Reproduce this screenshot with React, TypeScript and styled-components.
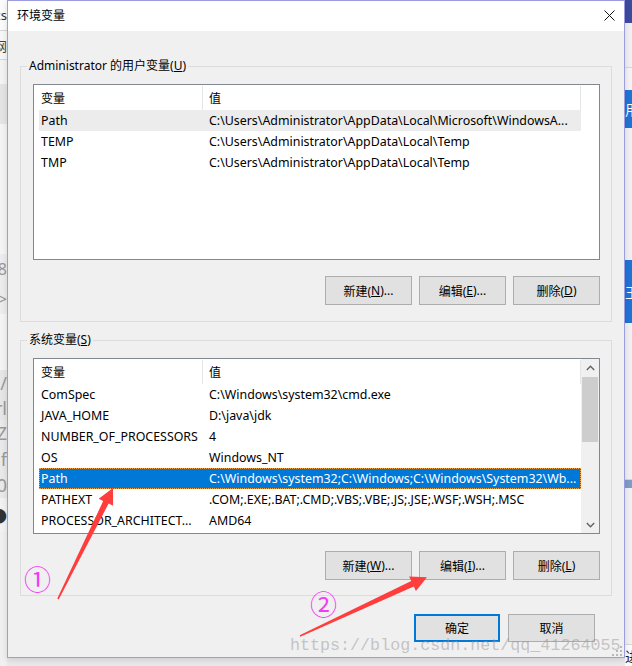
import React from "react";
import styled, { createGlobalStyle, css } from "styled-components";

const UI_FONT = `"Segoe UI", "Noto Sans", "Noto Sans CJK SC", sans-serif`;

const Global = createGlobalStyle`
  html, body { margin: 0; padding: 0; background: #e9e9eb; }
  body { font-family: ${UI_FONT}; font-size: 12px; color: #000; }
  * { box-sizing: border-box; }
`;

const Desktop = styled.div`
  position: relative;
  width: 632px;
  height: 666px;
  overflow: hidden;
  display: flex;
  align-items: flex-start;
  background: #e9e9eb;
`;

/* ---------- background windows peeking out ---------- */
const Peek = styled.div`
  width: 7px;
  height: 666px;
  flex: none;
  overflow: hidden;
  display: flex;
  flex-direction: column;
  background: #f0f0f0;
`;

const PeekBand = styled.div<{ $h: number; $bg?: string; $color?: string; $line?: boolean; $align?: "start" | "end"; $size?: number }>`
  height: ${(p) => p.$h}px;
  flex: none;
  background: ${(p) => p.$bg || "transparent"};
  color: ${(p) => p.$color || "#999"};
  display: flex;
  align-items: center;
  justify-content: ${(p) => (p.$align === "start" ? "flex-start" : "flex-end")};
  white-space: nowrap;
  font-size: ${(p) => p.$size || 13}px;
  ${(p) => p.$line && css`border-bottom: 1px solid #d6d6d6;`}
`;

/* ---------- dialog ---------- */
const Dialog = styled.div`
  position: relative;
  z-index: 1;
  width: 618px;
  height: 658px;
  flex: none;
  border: 1px solid #9c9cdf;
  background: #f0f0f0;
  display: flex;
  flex-direction: column;
  box-shadow: 0 2px 6px rgba(0, 0, 0, 0.12);
`;

const TitleBar = styled.div`
  height: 30px;
  flex: none;
  background: #fff;
  display: flex;
  align-items: center;
  justify-content: space-between;
  padding: 0 9px 0 9px;
`;

const Title = styled.span`
  font-size: 12px;
  line-height: 16px;
`;

const Close = styled.span`
  width: 11px;
  height: 11px;
  display: flex;
  margin-top: -1px;
`;

const Body = styled.div`
  flex: 1;
  display: flex;
  flex-direction: column;
  padding: 0 12px;
`;

const Group = styled.fieldset<{ $top: number; $bottom: number; $gap: number }>`
  margin: ${(p) => p.$top}px 0 0 0;
  padding: 10px 11px ${(p) => p.$bottom}px 12px;
  border: 1px solid #dcdcdc;
  min-width: 0;
  display: flex;
  flex-direction: column;
  gap: ${(p) => p.$gap}px;
`;

const Legend = styled.legend`
  padding: 0 2px;
  margin-left: -6px;
  font-size: 12px;
  line-height: 16px;
`;

const List = styled.div`
  height: 176px;
  border: 1px solid #828790;
  background: #fff;
  display: grid;
  grid-template-columns: 547px 1fr;
  overflow: hidden;
`;

const ListMain = styled.div`
  display: flex;
  flex-direction: column;
`;

const Header = styled.div`
  height: 25px;
  display: flex;
  flex: none;
`;

const HeadCell = styled.div<{ $w: number; $pad: number }>`
  width: ${(p) => p.$w}px;
  padding-left: ${(p) => p.$pad}px;
  border-right: 1px solid #e5e5e5;
  display: flex;
  align-items: center;
  margin-top: 1px;
`;

const Row = styled.div<{ $state?: "selected" | "inactive" }>`
  margin-left: 5px;
  width: 542px;
  height: 21px;
  flex: none;
  display: flex;
  align-items: center;
  font-size: 12.4px;
  ${(p) =>
    p.$state === "inactive" &&
    css`
      background: #ececec;
    `}
  ${(p) =>
    p.$state === "selected" &&
    css`
      background: #0078d7;
      color: #fff;
      outline: 1px dotted #f0a040;
      outline-offset: -1px;
    `}
`;

const Cell = styled.div<{ $w?: number; $pl: number }>`
  ${(p) => (p.$w ? css`width: ${p.$w}px; flex: none;` : css`flex: 1;`)}
  padding-left: ${(p) => p.$pl}px;
  padding-right: 4px;
  white-space: nowrap;
  overflow: hidden;
`;

const Scrollbar = styled.div`
  background: #f0f0f0;
  display: flex;
  flex-direction: column;
`;

const ArrowBox = styled.div`
  height: 17px;
  flex: none;
  display: flex;
  align-items: center;
  justify-content: center;
`;

const Thumb = styled.div`
  height: 65px;
  margin: 1px 1px 0 1px;
  background: #cdcdcd;
`;

const Spacer = styled.div`
  flex: 1;
`;

const ButtonRow = styled.div<{ $gap: number; $right?: number; $top?: number }>`
  display: flex;
  justify-content: flex-end;
  gap: ${(p) => p.$gap}px;
  padding-right: ${(p) => p.$right || 0}px;
  margin-top: ${(p) => p.$top || 0}px;
`;

const Button = styled.button<{ $w: number; $h: number; $default?: boolean }>`
  width: ${(p) => p.$w}px;
  height: ${(p) => p.$h}px;
  padding: 0;
  background: #e1e1e1;
  border: 1px solid #adadad;
  font-family: ${UI_FONT};
  font-size: 12px;
  color: #000;
  display: flex;
  align-items: center;
  justify-content: center;
  ${(p) =>
    p.$default &&
    css`
      border: 2px solid #0078d7;
    `}
`;

const Grip = styled.svg`
  position: absolute;
  right: 2px;
  bottom: 1px;
`;

/* ---------- annotations ---------- */
const Overlay = styled.svg`
  position: absolute;
  left: 0;
  top: 0;
  z-index: 3;
  pointer-events: none;
`;

const Circled = styled.span<{ $x: number; $y: number }>`
  position: absolute;
  left: ${(p) => p.$x}px;
  top: ${(p) => p.$y}px;
  z-index: 3;
  font-family: "Noto Sans CJK SC", "DejaVu Sans", sans-serif;
  font-size: 27px;
  line-height: 27px;
  color: #f23cf2;
`;

const Watermark = styled.span`
  position: absolute;
  left: 290px;
  top: 636px;
  z-index: 4;
  font-family: "Liberation Mono", monospace;
  font-size: 16.7px;
  line-height: 20px;
  color: rgba(150, 150, 150, 0.5);
  white-space: nowrap;
`;

type Var = { name: string; value: string; state?: "selected" | "inactive" };

const userVars: Var[] = [
  { name: "Path", value: "C:\\Users\\Administrator\\AppData\\Local\\Microsoft\\WindowsA...", state: "inactive" },
  { name: "TEMP", value: "C:\\Users\\Administrator\\AppData\\Local\\Temp" },
  { name: "TMP", value: "C:\\Users\\Administrator\\AppData\\Local\\Temp" },
];

const sysVars: Var[] = [
  { name: "ComSpec", value: "C:\\Windows\\system32\\cmd.exe" },
  { name: "JAVA_HOME", value: "D:\\java\\jdk" },
  { name: "NUMBER_OF_PROCESSORS", value: "4" },
  { name: "OS", value: "Windows_NT" },
  { name: "Path", value: "C:\\Windows\\system32;C:\\Windows;C:\\Windows\\System32\\Wb...", state: "selected" },
  { name: "PATHEXT", value: ".COM;.EXE;.BAT;.CMD;.VBS;.VBE;.JS;.JSE;.WSF;.WSH;.MSC" },
  { name: "PROCESSOR_ARCHITECT...", value: "AMD64" },
];

const Chevron = ({ up }: { up?: boolean }) => (
  <svg width="9" height="6" viewBox="0 0 9 6">
    <polyline
      points={up ? "0.8,5 4.5,1.2 8.2,5" : "0.8,1 4.5,4.8 8.2,1"}
      fill="none"
      stroke="#606060"
      strokeWidth="1.3"
    />
  </svg>
);

const VarList = ({ items, scroll }: { items: Var[]; scroll?: boolean }) => (
  <List>
    <ListMain>
      <Header>
        <HeadCell $w={169} $pad={7}>变量</HeadCell>
        <HeadCell $w={378} $pad={6}>值</HeadCell>
      </Header>
      {items.map((v) => (
        <Row key={v.name + v.value} $state={v.state}>
          <Cell $w={163} $pl={2}>{v.name}</Cell>
          <Cell $pl={7}>{v.value}</Cell>
        </Row>
      ))}
    </ListMain>
    {scroll ? (
      <Scrollbar>
        <ArrowBox>
          <Chevron up />
        </ArrowBox>
        <Thumb />
        <Spacer />
        <ArrowBox>
          <Chevron />
        </ArrowBox>
      </Scrollbar>
    ) : (
      <div />
    )}
  </List>
);

export default function App() {
  return (
    <>
      <Global />
      <Desktop>
        <Peek>
          <PeekBand $h={31} $bg="#fbfbfb" $color="#333" $line>ics</PeekBand>
          <PeekBand $h={29} $bg="#f7f7f7" $color="#444" $line>网</PeekBand>
          <PeekBand $h={24} $bg="#f3f3f3" />
          <PeekBand $h={40} $bg="#e4e4e4" />
          <PeekBand $h={130} $bg="#f4f4f4" />
          <PeekBand $h={30} $bg="#ececec" $size={16}>8</PeekBand>
          <PeekBand $h={30} $bg="#ececec" $size={16}>&gt;</PeekBand>
          <PeekBand $h={56} $bg="#f4f4f4" />
          <PeekBand $h={26} $bg="#e6e6e6" $size={18}>7/</PeekBand>
          <PeekBand $h={24} $bg="#e6e6e6" $size={18}>rl</PeekBand>
          <PeekBand $h={26} $bg="#e9e9e9" $size={18}>Z</PeekBand>
          <PeekBand $h={26} $bg="#e9e9e9" $size={18}>f</PeekBand>
          <PeekBand $h={26} $bg="#e9e9e9" $size={18}>0</PeekBand>
          <PeekBand $h={34} $bg="#f2f2f2" $color="#333" $size={16}>●</PeekBand>
          <PeekBand $h={210} $bg="#f0f0f0" />
        </Peek>

        <Dialog>
          <TitleBar>
            <Title>环境变量</Title>
            <Close>
              <svg width="11" height="11" viewBox="0 0 11 11">
                <path d="M0.5 0.5 L10.5 10.5 M10.5 0.5 L0.5 10.5" stroke="#111" strokeWidth="1" />
              </svg>
            </Close>
          </TitleBar>
          <Body>
            <Group $top={27} $bottom={16} $gap={16}>
              <Legend>
                Administrator 的用户变量(<u>U</u>)
              </Legend>
              <VarList items={userVars} />
              <ButtonRow $gap={7}>
                <Button $w={87} $h={29}>新建(<u>N</u>)...</Button>
                <Button $w={87} $h={29}>编辑(<u>E</u>)...</Button>
                <Button $w={87} $h={29}>删除(<u>D</u>)</Button>
              </ButtonRow>
            </Group>
            <Group $top={10} $bottom={15} $gap={17}>
              <Legend>
                系统变量(<u>S</u>)
              </Legend>
              <VarList items={sysVars} scroll />
              <ButtonRow $gap={7}>
                <Button $w={87} $h={29}>新建(<u>W</u>)...</Button>
                <Button $w={87} $h={29}>编辑(<u>I</u>)...</Button>
                <Button $w={87} $h={29}>删除(<u>L</u>)</Button>
              </ButtonRow>
            </Group>
            <ButtonRow $gap={8} $right={17} $top={18}>
              <Button $w={86} $h={28} $default>确定</Button>
              <Button $w={87} $h={28}>取消</Button>
            </ButtonRow>
          </Body>
          <Grip width="10" height="10" viewBox="0 0 10 10">
            <g fill="#b8b8b8">
              <rect x="8" y="0" width="2" height="2" />
              <rect x="4" y="4" width="2" height="2" />
              <rect x="8" y="4" width="2" height="2" />
              <rect x="0" y="8" width="2" height="2" />
              <rect x="4" y="8" width="2" height="2" />
              <rect x="8" y="8" width="2" height="2" />
            </g>
          </Grip>
        </Dialog>

        <Peek>
          <PeekBand $h={23} $bg="#3c4b9f" />
          <PeekBand $h={45} $bg="#f0f0f0" $line />
          <PeekBand $h={22} $bg="#f3f3f3" />
          <PeekBand $h={38} $bg="#1e73d6" $color="#fff" $align="start" $size={14}>用</PeekBand>
          <PeekBand $h={132} $bg="#f0f0f0" />
          <PeekBand $h={63} $bg="#1e73d6" $color="#fff" $align="start" $size={14}>王</PeekBand>
          <PeekBand $h={157} $bg="#f0f0f0" $line />
          <PeekBand $h={8} $bg="#7d9cc8" />
          <PeekBand $h={157} $bg="#f0f0f0" $line />
          <PeekBand $h={21} $bg="#fafafa" $color="#222" $align="start" $size={14}>进</PeekBand>
        </Peek>

        <Overlay width="632" height="666" viewBox="0 0 632 666">
          <polygon
            fill="#ff3d3d"
            points="113,488 113.1,505.8 108.6,503.6 58.7,599.4 57.3,598.6 103.2,501 98.7,498.8"
          />
          <polygon
            fill="#ff3d3d"
            points="427,577.3 415.9,591 413.8,586.4 300.3,636.7 299.7,635.3 411.2,581 409.1,576.4"
          />
        </Overlay>
        <Circled $x={24} $y={565}>①</Circled>
        <Circled $x={310} $y={590}>②</Circled>
        <Watermark>https://blog.csdn.net/qq_41264055</Watermark>
      </Desktop>
    </>
  );
}
